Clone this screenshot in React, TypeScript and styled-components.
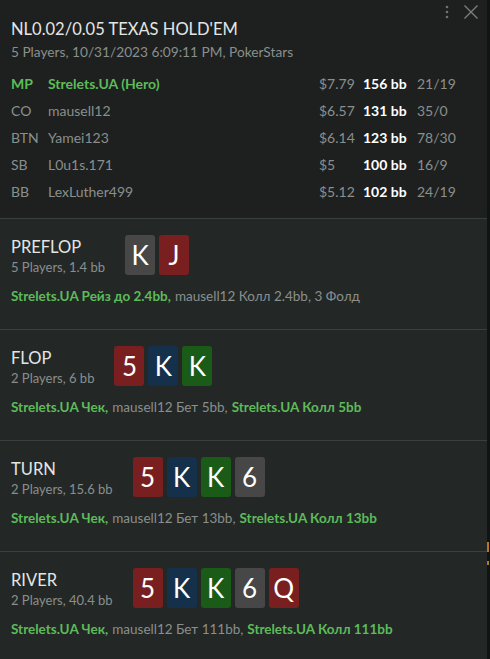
import React from "react";
import styled, { createGlobalStyle } from "styled-components";

const GlobalStyle = createGlobalStyle`
  html, body {
    margin: 0;
    padding: 0;
    background: #1d201f;
    font-family: Lato, "Noto Sans", sans-serif;
  }
`;

type Suit = "s" | "h" | "d" | "c";

interface Player {
  pos: string;
  name: string;
  stack: string;
  bb: string;
  stats: string;
  hero?: boolean;
}

interface Action {
  text: string;
  hero?: boolean;
}

interface Street {
  name: string;
  info: string;
  cards: [string, Suit][];
  actions: Action[];
}

const players: Player[] = [
  { pos: "MP", name: "Strelets.UA (Hero)", stack: "$7.79", bb: "156 bb", stats: "21/19", hero: true },
  { pos: "CO", name: "mausell12", stack: "$6.57", bb: "131 bb", stats: "35/0" },
  { pos: "BTN", name: "Yamei123", stack: "$6.14", bb: "123 bb", stats: "78/30" },
  { pos: "SB", name: "L0u1s.171", stack: "$5", bb: "100 bb", stats: "16/9" },
  { pos: "BB", name: "LexLuther499", stack: "$5.12", bb: "102 bb", stats: "24/19" },
];

const board: [string, Suit][] = [["5", "h"], ["K", "d"], ["K", "c"], ["6", "s"], ["Q", "h"]];

const streets: Street[] = [
  {
    name: "PREFLOP",
    info: "5 Players, 1.4 bb",
    cards: [["K", "s"], ["J", "h"]],
    actions: [
      { text: "Strelets.UA Рейз до 2.4bb,", hero: true },
      { text: "mausell12 Колл 2.4bb, 3 Фолд" },
    ],
  },
  {
    name: "FLOP",
    info: "2 Players, 6 bb",
    cards: board.slice(0, 3),
    actions: [
      { text: "Strelets.UA Чек,", hero: true },
      { text: "mausell12 Бет 5bb," },
      { text: "Strelets.UA Колл 5bb", hero: true },
    ],
  },
  {
    name: "TURN",
    info: "2 Players, 15.6 bb",
    cards: board.slice(0, 4),
    actions: [
      { text: "Strelets.UA Чек,", hero: true },
      { text: "mausell12 Бет 13bb," },
      { text: "Strelets.UA Колл 13bb", hero: true },
    ],
  },
  {
    name: "RIVER",
    info: "2 Players, 40.4 bb",
    cards: board,
    actions: [
      { text: "Strelets.UA Чек,", hero: true },
      { text: "mausell12 Бет 111bb," },
      { text: "Strelets.UA Колл 111bb", hero: true },
    ],
  },
];

const suitColors: Record<Suit, string> = {
  s: "#474747",
  h: "#7a1f1f",
  d: "#15304a",
  c: "#1b5b18",
};

const App: React.FC = () => {
  return (
    <>
      <GlobalStyle />
      <Layout>
        <Panel>
          <Header>
            <TopIcons>
              <svg width="4" height="14" viewBox="0 0 4 14">
                <circle cx="2" cy="2" r="1.3" fill="#6e7371" />
                <circle cx="2" cy="7" r="1.3" fill="#6e7371" />
                <circle cx="2" cy="12" r="1.3" fill="#6e7371" />
              </svg>
              <svg width="16" height="16" viewBox="0 0 16 16">
                <path d="M1.5 1.5 L14.5 14.5 M14.5 1.5 L1.5 14.5" stroke="#7a7f7d" strokeWidth="1.4" />
              </svg>
            </TopIcons>
            <Title>NL0.02/0.05 TEXAS HOLD'EM</Title>
            <HeaderSub>5 Players, 10/31/2023 6:09:11 PM, PokerStars</HeaderSub>
            <PlayerTable>
              {players.map((p) => (
                <PlayerRow key={p.pos}>
                  <Pos $hero={p.hero}>{p.pos}</Pos>
                  <Name $hero={p.hero}>{p.name}</Name>
                  <Stack>{p.stack}</Stack>
                  <BB>{p.bb}</BB>
                  <Stats>{p.stats}</Stats>
                </PlayerRow>
              ))}
            </PlayerTable>
          </Header>
          {streets.map((s) => (
            <Section key={s.name}>
              <StreetTop>
                <StreetInfo>
                  <StreetName>{s.name}</StreetName>
                  <StreetSub>{s.info}</StreetSub>
                </StreetInfo>
                <Cards>
                  {s.cards.map(([rank, suit], i) => (
                    <Card key={i} $suit={suit}>
                      {rank}
                    </Card>
                  ))}
                </Cards>
              </StreetTop>
              <Actions>
                {s.actions.map((a, i) => (
                  <ActionText key={i} $hero={a.hero}>
                    {a.text}
                  </ActionText>
                ))}
              </Actions>
            </Section>
          ))}
        </Panel>
        <SideStrip>
          <Mark $top={542} />
          <Mark $top={561} $small />
        </SideStrip>
      </Layout>
    </>
  );
};

export default App;

const Layout = styled.div`
  display: flex;
  width: 490px;
  height: 659px;
  overflow: hidden;
`;

const Panel = styled.div`
  flex: 1;
  display: flex;
  flex-direction: column;
  background: #232826;
`;

const SideStrip = styled.div`
  position: relative;
  width: 3px;
  background: #101513;
`;

const Mark = styled.div<{ $top: number; $small?: boolean }>`
  position: absolute;
  left: 0;
  top: ${(p) => p.$top}px;
  width: 2px;
  height: ${(p) => (p.$small ? 4 : 10)}px;
  background: #b5781f;
`;

const Header = styled.div`
  position: relative;
  background: #1d201f;
  padding: 18px 11px 13px;
`;

const TopIcons = styled.div`
  position: absolute;
  top: 4px;
  right: 8px;
  display: flex;
  align-items: center;
  gap: 14px;
`;

const Title = styled.div`
  font-size: 16.5px;
  line-height: 22px;
  color: #e4e6e5;
`;

const HeaderSub = styled.div`
  margin-top: 3px;
  font-size: 13.7px;
  line-height: 18px;
  color: #8a8f8d;
`;

const PlayerTable = styled.div`
  margin-top: 9px;
  display: flex;
  flex-direction: column;
`;

const PlayerRow = styled.div`
  display: grid;
  grid-template-columns: 37px 271px 44px 54px auto;
  height: 27px;
  align-items: center;
  font-size: 14px;
`;

const Pos = styled.span<{ $hero?: boolean }>`
  color: ${(p) => (p.$hero ? "#5dbb5a" : "#8a8f8d")};
  font-weight: ${(p) => (p.$hero ? 700 : 400)};
`;

const Name = styled.span<{ $hero?: boolean }>`
  color: ${(p) => (p.$hero ? "#5dbb5a" : "#8a8f8d")};
  font-weight: ${(p) => (p.$hero ? 700 : 400)};
`;

const Stack = styled.span`
  color: #8a8f8d;
`;

const BB = styled.span`
  color: #ffffff;
  font-weight: 700;
`;

const Stats = styled.span`
  color: #8a8f8d;
`;

const Section = styled.div`
  border-top: 1px solid #3a3f3d;
  padding: 16px 11px 24px;
`;

const StreetTop = styled.div`
  display: flex;
  align-items: flex-start;
  gap: 20px;
`;

const StreetInfo = styled.div`
  display: flex;
  flex-direction: column;
  padding-top: 2px;
`;

const StreetName = styled.div`
  font-size: 16.5px;
  line-height: 21px;
  color: #e4e6e5;
`;

const StreetSub = styled.div`
  font-size: 13px;
  line-height: 18px;
  color: #8a8f8d;
`;

const Cards = styled.div`
  display: flex;
  gap: 4px;
`;

const Card = styled.div<{ $suit: Suit }>`
  width: 30px;
  height: 40px;
  border-radius: 3px;
  background: ${(p) => suitColors[p.$suit]};
  color: #ffffff;
  font-size: 26px;
  line-height: 40px;
  text-align: center;
`;

const Actions = styled.div`
  margin-top: 12px;
  display: flex;
  flex-wrap: wrap;
  gap: 4px;
  font-size: 13.5px;
  line-height: 17px;
`;

const ActionText = styled.span<{ $hero?: boolean }>`
  color: ${(p) => (p.$hero ? "#5dbb5a" : "#8a8f8d")};
  font-weight: ${(p) => (p.$hero ? 700 : 400)};
`;
